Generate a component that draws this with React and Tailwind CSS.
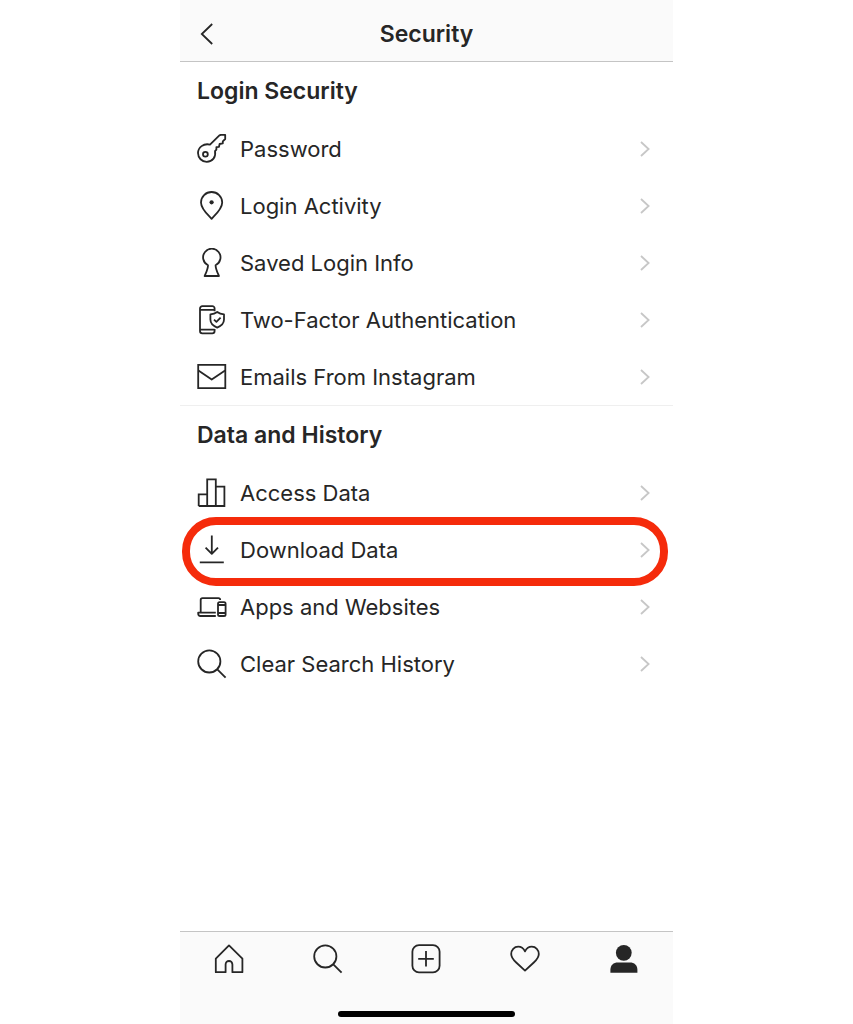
import React from 'react'

const Icon = ({ children, className = "size-[30px] shrink-0" }) => (
    <svg
        viewBox="0 0 30 30"
        fill="none"
        stroke="currentColor"
        strokeWidth="1.8"
        strokeLinejoin="round"
        className={className}
        aria-hidden="true"
    >
        {children}
    </svg>
)

const KeyIcon = () => (
    <Icon>
        <path d="M13 10.6 22.4 1.4 23.8 0.9H28.2V5L25.8 7.4V9.4L22.6 10 22 12.8 19.4 13.2V15.6L18 17.2C19.2 23 15.6 27.8 9.7 27.8 4.9 27.8 1 23.9 1 19.1 1 13.4 6.6 9 13 10.6Z" />
        <circle cx="8.4" cy="20.2" r="2.4" />
    </Icon>
)

const PinIcon = () => (
    <Icon>
        <path d="M14.6 27.8C12.4 25.2 4 18.2 4 11.4A10.6 10.4 0 0 1 25.2 11.4C25.2 18.2 16.8 25.2 14.6 27.8Z" />
        <circle cx="14.6" cy="11.3" r="2.1" fill="currentColor" stroke="none" />
    </Icon>
)

const KeyholeIcon = () => (
    <Icon>
        <path d="M11 17.2A8.7 8.7 0 1 1 18.6 17.2C18.6 21 20.2 24 22 28H7.6C9.4 24 11 21 11 17.2Z" />
    </Icon>
)

const TwoFactorIcon = () => (
    <Icon>
        <path d="M17.6 6.2V3.4A2.3 2.3 0 0 0 15.3 1.1H5.3A2.3 2.3 0 0 0 3 3.4V26A2.3 2.3 0 0 0 5.3 28.3H15.3A2.3 2.3 0 0 0 17.6 26V23.9" />
        <path d="M3 4.8H17.6M3 24.6H17.6" />
        <path d="M20.2 7C22.2 8.6 24.4 9.3 27 9.4V14.6C27 18.6 24.2 21 20.2 22.6 16.2 21 13.4 18.6 13.4 14.6V9.4C16 9.3 18.2 8.6 20.2 7Z" />
        <path d="M17 14.6 19.4 16.8 23.6 12.6" />
    </Icon>
)

const MailIcon = () => (
    <Icon>
        <path d="M1.2 2.8H28.3V26.2H1.2Z" strokeLinejoin="miter" />
        <path d="M1.4 8.6 14.7 17.6 28.1 8.6" />
    </Icon>
)

const BarsIcon = () => (
    <Icon>
        <path d="M1.7 28V16.4H10.2M10.2 28V1.4H18.8V28M18.8 8.6H27.4V28H1.7" strokeLinejoin="miter" />
    </Icon>
)

const DownloadIcon = () => (
    <Icon>
        <path d="M14.8 0.6V18.8M8.6 12.6 14.8 18.8 21 12.6M2.8 27.4H26.8" />
    </Icon>
)

const DevicesIcon = () => (
    <Icon>
        <path d="M3.7 20.4V8A1.8 1.8 0 0 1 5.5 6.2H21.4A1.8 1.8 0 0 1 23.2 8" />
        <path d="M18.8 20.6H1.2V21.8A2.2 2.2 0 0 0 3.4 24H18.8" />
        <rect x="21" y="10.2" width="7.6" height="13.8" rx="1.6" />
        <path d="M21 13H28.6M21 21H28.6" />
    </Icon>
)

const SearchIcon = () => (
    <Icon>
        <circle cx="12.3" cy="12.4" r="11.1" />
        <path d="M20.3 20.4 28.6 28.6" />
    </Icon>
)

const HomeIcon = () => (
    <Icon>
        <path d="M15 1.4 28.4 14.6V28.2H18.4V20.4A3.4 3.4 0 0 0 11.6 20.4V28.2H1.8V14.6Z" />
    </Icon>
)

const AddIcon = () => (
    <Icon>
        <rect x="1.4" y="1.2" width="27.2" height="27.2" rx="6.6" />
        <path d="M15 7V22.6M7.2 14.8H22.8" />
    </Icon>
)

const HeartIcon = () => (
    <Icon>
        <path d="M15 7.4C13.4 4.2 11 2.7 8.2 2.7 4.2 2.7 1.2 5.8 1.2 10.1 1.2 14 3.6 16.2 6.2 18.5L15 26.6 23.8 18.5C26.4 16.2 28.8 14 28.8 10.1 28.8 5.8 25.8 2.7 21.8 2.7 19 2.7 16.6 4.2 15 7.4Z" />
    </Icon>
)

const ProfileIcon = () => (
    <Icon>
        <g fill="currentColor" stroke="none">
            <circle cx="14.8" cy="8.8" r="7.9" />
            <path d="M1.4 28.8V25.8C1.4 21 4.4 18.4 9 18.4H20.8C25.4 18.4 28.4 21 28.4 25.8V28.8Z" />
        </g>
    </Icon>
)

const sections = [
    {
        title: "Login Security",
        items: [
            { label: "Password", icon: KeyIcon },
            { label: "Login Activity", icon: PinIcon },
            { label: "Saved Login Info", icon: KeyholeIcon },
            { label: "Two-Factor Authentication", icon: TwoFactorIcon },
            { label: "Emails From Instagram", icon: MailIcon },
        ],
    },
    {
        title: "Data and History",
        items: [
            { label: "Access Data", icon: BarsIcon },
            { label: "Download Data", icon: DownloadIcon, highlighted: true },
            { label: "Apps and Websites", icon: DevicesIcon },
            { label: "Clear Search History", icon: SearchIcon },
        ],
    },
]

const tabs = [
    { label: "Home", icon: HomeIcon },
    { label: "Search", icon: SearchIcon },
    { label: "New post", icon: AddIcon },
    { label: "Activity", icon: HeartIcon },
    { label: "Profile", icon: ProfileIcon },
]

const SettingsRow = ({ label, icon: RowIcon, highlighted }) => (
    <li className="relative">
        <a href="#" className="flex h-[57px] items-center gap-[13px] pl-[17px] pr-[23px]">
            <RowIcon />
            <span className="flex-1 text-[22px] leading-7">{label}</span>
            <svg viewBox="0 0 10 18" fill="none" stroke="#c7c7c7" strokeWidth="1.8" className="h-[18px] w-[10px] shrink-0" aria-hidden="true">
                <path d="M1 2 8.6 9 1 16" />
            </svg>
        </a>
        {highlighted && (
            <span className="pointer-events-none absolute -top-1 -bottom-2 left-0.5 right-[5px] rounded-[34px] border-8 border-[#f52b0b]" />
        )}
    </li>
)

const App = () => {
    return (
        <div className="min-h-screen bg-white font-['Inter',sans-serif] text-[#262626]">
            <div className="mx-auto flex min-h-screen w-full max-w-[493px] flex-col">
                <header className="grid h-[62px] grid-cols-[60px_1fr_60px] items-center border-b border-[#c4c4c4] bg-[#fafafa] pt-1.5">
                    <button type="button" aria-label="Back" className="flex h-11 items-center pl-5">
                        <svg viewBox="0 0 14 22" fill="none" stroke="currentColor" strokeWidth="1.8" className="h-[22px] w-[14px]" aria-hidden="true">
                            <path d="M12.2 1 1.8 11 12.2 21" />
                        </svg>
                    </button>
                    <h1 className="text-center text-[23px] leading-7 font-semibold">Security</h1>
                </header>

                <main className="flex-1">
                    {sections.map((section) => (
                        <section key={section.title} className="border-b border-[#efefef] last:border-b-0">
                            <h2 className="flex h-[58px] items-center px-[17px] text-[23px] leading-7 font-semibold">{section.title}</h2>
                            <ul>
                                {section.items.map((item) => (
                                    <SettingsRow key={item.label} {...item} />
                                ))}
                            </ul>
                        </section>
                    ))}
                </main>

                <footer className="flex flex-col items-center justify-between border-t border-[#c4c4c4] bg-[#fafafa] pb-[7px]">
                    <nav className="grid h-[79px] w-full grid-cols-5 items-start pt-3">
                        {tabs.map(({ label, icon: TabIcon }) => (
                            <a key={label} href="#" aria-label={label} className="flex justify-center">
                                <TabIcon />
                            </a>
                        ))}
                    </nav>
                    <div className="h-1.5 w-[177px] rounded-full bg-black" />
                </footer>
            </div>
        </div>
    )
}

export default App
